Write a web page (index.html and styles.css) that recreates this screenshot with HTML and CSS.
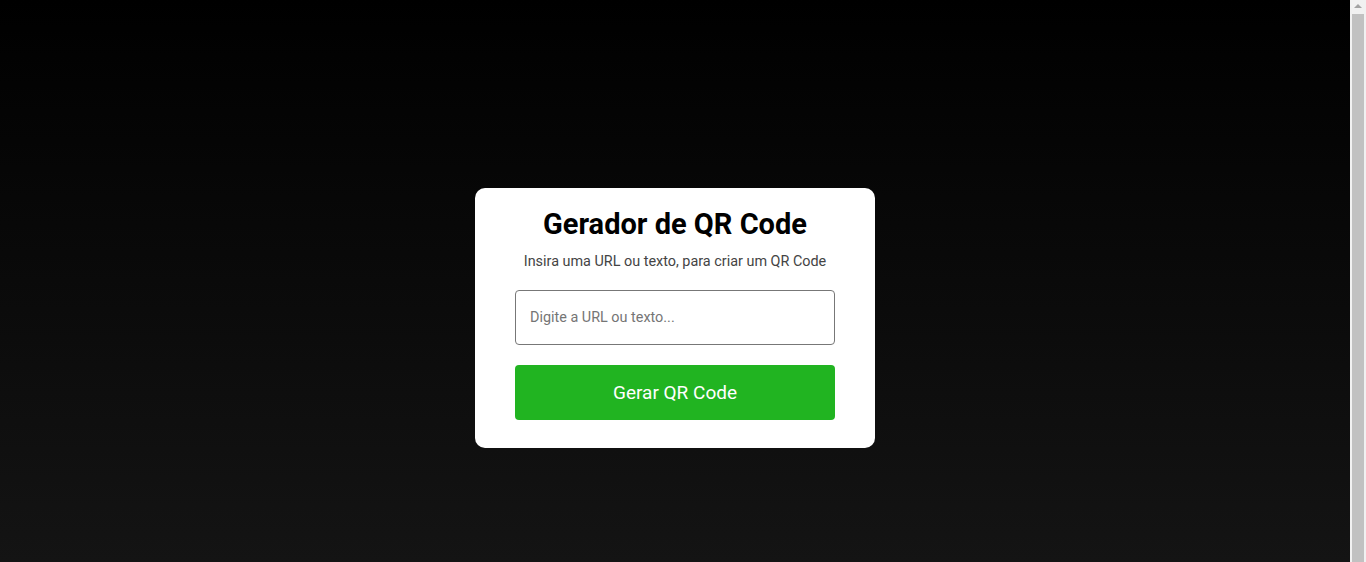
FILE: index.html
```html
<!DOCTYPE html>
<html lang="pt-BR">
<head>
<meta charset="utf-8">
<title>Gerador de QR Code</title>
<link rel="stylesheet" href="styles.css">
</head>
<body>
  <main class="page">
    <div class="card">
      <h1 class="title">Gerador de QR Code</h1>
      <p class="subtitle">Insira uma URL ou texto, para criar um QR Code</p>
      <input class="field" type="text" placeholder="Digite a URL ou texto...">
      <button class="btn" type="button">Gerar QR Code</button>
    </div>
  </main>
  <div class="scrollbar" aria-hidden="true">
    <div class="scroll-arrow"></div>
    <div class="scroll-thumb"></div>
  </div>
</body>
</html>
```

FILE: styles.css
```css
* { box-sizing: border-box; }

html {
  background: #000;
}

body {
  margin: 0;
  font-family: Roboto, "Liberation Sans", Arial, sans-serif;
  background: linear-gradient(to bottom, #000000, #141414);
  height: 562px;
  overflow: hidden;
}

.page {
  height: 562px;
  margin-right: 16px;
  padding-top: 188px;
  display: flex;
  align-items: flex-start;
  justify-content: center;
}

.card {
  width: 400px;
  background: #fff;
  border-radius: 10px;
  padding: 20px 40px 28px;
  display: flex;
  flex-direction: column;
  align-items: stretch;
  text-align: center;
}

.title {
  margin: 0;
  font-size: 29px;
  line-height: 33px;
  font-weight: 700;
  color: #000;
}

.subtitle {
  margin: 12px 0 0;
  font-size: 14.4px;
  line-height: 17px;
  color: #444;
}

.field {
  margin-top: 20px;
  height: 55px;
  width: 100%;
  border: 1px solid #777;
  border-radius: 4px;
  padding: 0 14px;
  font-family: inherit;
  font-size: 14.4px;
  color: #333;
  outline: none;
}

.field::placeholder {
  color: #757575;
}

.btn {
  margin-top: 20px;
  height: 55px;
  width: 100%;
  border: none;
  border-radius: 4px;
  background: #21b421;
  color: #fff;
  font-family: inherit;
  font-size: 19px;
  cursor: pointer;
}

.scrollbar {
  position: fixed;
  top: 0;
  right: 0;
  width: 16px;
  height: 100%;
  background: #f1f1f1;
  display: flex;
  flex-direction: column;
  align-items: center;
}

.scroll-arrow {
  margin-top: 4px;
  width: 0;
  height: 0;
  border-left: 4px solid transparent;
  border-right: 4px solid transparent;
  border-bottom: 4px solid #a3a3a3;
}

.scroll-thumb {
  margin-top: 6px;
  width: 12px;
  flex: 1;
  background: #c1c1c1;
}
```
